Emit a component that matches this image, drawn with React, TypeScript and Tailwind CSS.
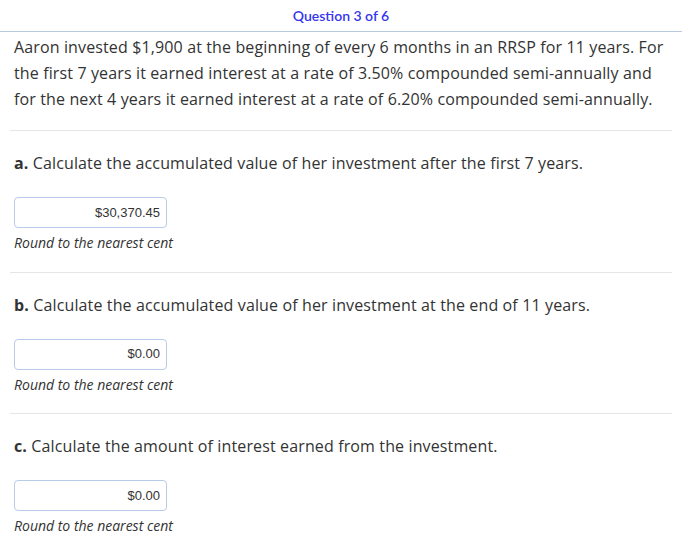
import React from "react";

const Section = ({ label, text, value }: { label: string; text: string; value: string }) => (
  <div className="mx-[10px] border-t border-[#e6e6e6] px-[4px] pt-[19px] pb-[18.5px]">
    <div className="text-[16px] leading-[26px] tracking-[0.13px] text-[#333]">
      <span className="font-bold">{label}</span> {text}
    </div>
    <div className="mt-[21px] flex h-[31px] w-[153px] items-center justify-end rounded-[4px] border border-[#b9cbe9] pr-[6px] font-['Liberation_Sans',Arial,sans-serif] text-[13px] text-[#333]">
      {value}
    </div>
    <div className="mt-[5px] text-[14px] italic leading-[20px] text-[#333]">Round to the nearest cent</div>
  </div>
);

export default function App() {
  return (
    <div className="h-[533px] w-[682px] overflow-hidden bg-white font-['Open_Sans',sans-serif]">
      <div className="flex h-[32px] items-center justify-center border-b border-[#b9c9e0] font-['Lato',sans-serif] text-[14px] font-semibold text-[#3535f0]">
        Question 3 of 6
      </div>
      <div className="pl-[14px] pr-[12px] pt-[2px] pb-[18px] text-[16px] leading-[26px] tracking-[0.13px] text-[#333]">
        Aaron invested $1,900 at the beginning of every 6 months in an RRSP for 11 years. For the first 7 years it earned interest at a rate of 3.50% compounded semi-annually and for the next 4 years it earned interest at a rate of 6.20% compounded semi-annually.
      </div>
      <Section label="a." text="Calculate the accumulated value of her investment after the first 7 years." value="$30,370.45" />
      <Section label="b." text="Calculate the accumulated value of her investment at the end of 11 years." value="$0.00" />
      <Section label="c." text="Calculate the amount of interest earned from the investment." value="$0.00" />
    </div>
  );
}
